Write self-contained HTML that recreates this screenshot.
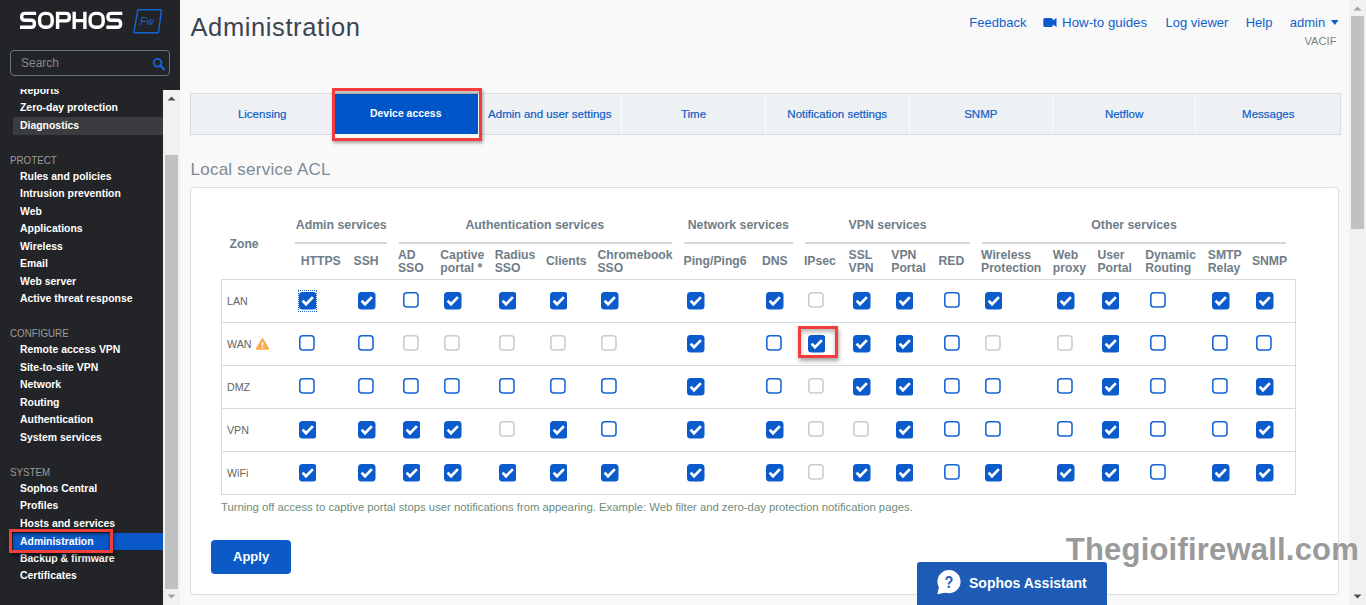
<!DOCTYPE html>
<html><head><meta charset="utf-8">
<style>
*{box-sizing:border-box}
html,body{margin:0;padding:0}
body{width:1366px;height:605px;overflow:hidden;position:relative;background:#f9f9fa;font-family:"Liberation Sans",sans-serif}
.a{position:absolute;white-space:nowrap;line-height:1}
#side{position:absolute;left:0;top:0;width:180px;height:605px;background:#232427}
#nav{position:absolute;left:0;top:89px;width:163px;height:516px;overflow:hidden}
.ni{position:absolute;left:20px;color:#fff;font-weight:bold;font-size:11.3px;line-height:1;white-space:nowrap}
.nh{position:absolute;left:10px;color:#9c9c9c;font-size:11px;line-height:1;white-space:nowrap}
.cb{position:absolute;display:block}
.cbu{position:absolute;width:16px;height:16px;border:1.4px solid #1764d4;border-radius:3px;background:#fff}
.hd{position:absolute;color:#6f7d87;font-weight:bold;font-size:12.2px;line-height:12.8px;white-space:nowrap}
.gl{position:absolute;height:2px;background:#d3d9dd;top:242px}
.tab{position:absolute;top:93px;height:41px;color:#1b5fc4;font-size:11.5px;text-align:center;line-height:41px}
.tsep{position:absolute;top:94px;width:1px;height:40px;background:#fbfcfd}
.zr{position:absolute;left:221px;width:1075px;height:1px;background:#d5dce0}
.zn{position:absolute;left:227px;color:#636363;font-size:11px;line-height:1}
.lk{position:absolute;color:#0f5fcc;font-size:13px;line-height:1;white-space:nowrap}
</style></head><body>

<div id="side">
  <svg class="a" style="left:0;top:0" width="180" height="45" viewBox="0 0 180 45">
    <g fill="none" stroke="#fff" stroke-width="3.4">
      <!-- S -->
      <path d="M36.1 13.4 H25 Q21.7 13.4 21.7 16.5 V17.3 Q21.7 20.3 25 20.3 H31 Q34.4 20.3 34.4 23.4 V24.2 Q34.4 27.3 31 27.3 H20"/>
      <!-- O -->
      <rect x="39.6" y="13.4" width="12.6" height="13.9" rx="5.5"/>
      <!-- P -->
      <path d="M57.6 29 V13.4 H66 Q69.3 13.4 69.3 16.5 V17.8 Q69.3 20.9 66 20.9 H57.6"/>
      <!-- H -->
      <path d="M74.2 11.7 V29 M84.9 11.7 V29 M74.2 20.6 H84.9"/>
      <!-- O -->
      <rect x="90.1" y="13.4" width="13.1" height="13.9" rx="5.5"/>
      <!-- S -->
      <path d="M122.3 13.4 H111.2 Q108 13.4 108 16.5 V17.3 Q108 20.3 111.2 20.3 H117.2 Q120.6 20.3 120.6 23.4 V24.2 Q120.6 27.3 117.2 27.3 H106.4"/>
    </g>
    <path d="M138.5 9.8 H160.8 Q161.6 9.8 161.4 10.6 L158.6 31.9 Q158.5 32.7 157.7 32.7 H134.8 Q134 32.7 134.1 31.9 L137.6 10.6 Q137.7 9.8 138.5 9.8 Z" fill="none" stroke="#1466d6" stroke-width="1.4"/>
    <text x="140.3" y="25.2" fill="#1466d6" font-family="Liberation Sans" font-style="italic" font-size="10" textLength="13.5">Fw</text>
  </svg>
  <div class="a" style="left:10px;top:50px;width:160px;height:26px;border:1px solid #6c747c;border-radius:4px"></div>
  <div class="a" style="left:21px;top:57px;color:#85898d;font-size:12px">Search</div>
  <svg class="a" style="left:152px;top:56.5px" width="14" height="14" viewBox="0 0 14 14"><circle cx="5.6" cy="5.8" r="3.9" fill="none" stroke="#1466e0" stroke-width="1.8"/><path d="M8.4 8.6 L12 12.2" stroke="#1466e0" stroke-width="2.2" stroke-linecap="round"/></svg>

  <div id="nav">
<div class="a" style="left:13px;top:27.7px;width:150px;height:18px;background:#3b3c3f"></div>
<div class="ni" style="left:20.0px;top:-5.32px;font-size:11.6px;transform:scaleX(0.9);transform-origin:0 0;">Reports</div>
<div class="ni" style="left:20.0px;top:12.08px;font-size:11.6px;transform:scaleX(0.9);transform-origin:0 0;">Zero-day protection</div>
<div class="ni" style="left:20.0px;top:29.98px;font-size:11.6px;transform:scaleX(0.9);transform-origin:0 0;">Diagnostics</div>
<div class="nh" style="left:10.3px;top:66.17px;font-size:11.5px;transform:scaleX(0.85);transform-origin:0 0;">PROTECT</div>
<div class="ni" style="left:20.0px;top:80.78px;font-size:11.6px;transform:scaleX(0.9);transform-origin:0 0;">Rules and policies</div>
<div class="ni" style="left:20.0px;top:98.28px;font-size:11.6px;transform:scaleX(0.9);transform-origin:0 0;">Intrusion prevention</div>
<div class="ni" style="left:20.0px;top:115.78px;font-size:11.6px;transform:scaleX(0.9);transform-origin:0 0;">Web</div>
<div class="ni" style="left:20.0px;top:133.28px;font-size:11.6px;transform:scaleX(0.9);transform-origin:0 0;">Applications</div>
<div class="ni" style="left:20.0px;top:150.78px;font-size:11.6px;transform:scaleX(0.9);transform-origin:0 0;">Wireless</div>
<div class="ni" style="left:20.0px;top:168.28px;font-size:11.6px;transform:scaleX(0.9);transform-origin:0 0;">Email</div>
<div class="ni" style="left:20.0px;top:185.78px;font-size:11.6px;transform:scaleX(0.9);transform-origin:0 0;">Web server</div>
<div class="ni" style="left:20.0px;top:203.28px;font-size:11.6px;transform:scaleX(0.9);transform-origin:0 0;">Active threat response</div>
<div class="nh" style="left:10.3px;top:239.27px;font-size:11.5px;transform:scaleX(0.85);transform-origin:0 0;">CONFIGURE</div>
<div class="ni" style="left:20.0px;top:254.38px;font-size:11.6px;transform:scaleX(0.9);transform-origin:0 0;">Remote access VPN</div>
<div class="ni" style="left:20.0px;top:271.88px;font-size:11.6px;transform:scaleX(0.9);transform-origin:0 0;">Site-to-site VPN</div>
<div class="ni" style="left:20.0px;top:289.38px;font-size:11.6px;transform:scaleX(0.9);transform-origin:0 0;">Network</div>
<div class="ni" style="left:20.0px;top:306.88px;font-size:11.6px;transform:scaleX(0.9);transform-origin:0 0;">Routing</div>
<div class="ni" style="left:20.0px;top:324.38px;font-size:11.6px;transform:scaleX(0.9);transform-origin:0 0;">Authentication</div>
<div class="ni" style="left:20.0px;top:341.88px;font-size:11.6px;transform:scaleX(0.9);transform-origin:0 0;">System services</div>
<div class="nh" style="left:10.3px;top:377.97px;font-size:11.5px;transform:scaleX(0.85);transform-origin:0 0;">SYSTEM</div>
<div class="a" style="left:13px;top:443.6px;width:150px;height:17.3px;background:#0b58c9"></div>
<div class="ni" style="left:20.0px;top:392.98px;font-size:11.6px;transform:scaleX(0.9);transform-origin:0 0;">Sophos Central</div>
<div class="ni" style="left:20.0px;top:410.43px;font-size:11.6px;transform:scaleX(0.9);transform-origin:0 0;">Profiles</div>
<div class="ni" style="left:20.0px;top:427.88px;font-size:11.6px;transform:scaleX(0.9);transform-origin:0 0;">Hosts and services</div>
<div class="ni" style="left:20.0px;top:446.13px;font-size:11.6px;transform:scaleX(0.9);transform-origin:0 0;">Administration</div>
<div class="ni" style="left:20.0px;top:462.78px;font-size:11.6px;transform:scaleX(0.9);transform-origin:0 0;">Backup &amp; firmware</div>
<div class="ni" style="left:20.0px;top:480.23px;font-size:11.6px;transform:scaleX(0.9);transform-origin:0 0;">Certificates</div>
<div class="a" style="left:9px;top:440px;width:104px;height:24px;border:3px solid #f03f3f;box-shadow:1px 3px 4px rgba(0,0,0,.5), inset 0 2px 4px rgba(0,0,0,.45)"></div>
  </div>
  <!-- sidebar scrollbar -->
  <div class="a" style="left:163px;top:90px;width:17px;height:515px;background:#f1f1f1"></div>
  <div class="a" style="left:165px;top:155px;width:13px;height:434px;background:#c1c1c1"></div>
  <svg class="a" style="left:163px;top:90px" width="17" height="17"><path d="M4.5 10.5 L8.5 6.5 L12.5 10.5Z" fill="#505050"/></svg>
  <svg class="a" style="left:163px;top:588px" width="17" height="17"><path d="M4.5 6.5 L8.5 10.5 L12.5 6.5Z" fill="#a3a3a3"/></svg>
</div>

<!-- header -->
<div class="a" style="left:190.5px;top:15.1px;color:#3a4550;font-size:25.5px;letter-spacing:0.6px">Administration</div>
<div class="lk" style="left:969.3px;top:16.00px;font-size:13px;">Feedback</div>
<svg class="a" style="left:1043px;top:17.9px" width="14" height="9.2" viewBox="0 0 14 9.2"><rect x="0.3" y="0" width="9.5" height="9" rx="1.6" fill="#0b5bcc"/><path d="M9 3 L13.5 0 V9 L9 6Z" fill="#0b5bcc"/></svg>
<div class="lk" style="left:1062.1px;top:15.74px;font-size:13.3px;">How-to guides</div>
<div class="lk" style="left:1165.5px;top:16.00px;font-size:13px;">Log viewer</div>
<div class="lk" style="left:1245.7px;top:16.00px;font-size:13px;">Help</div>
<div class="lk" style="left:1289.8px;top:16.00px;font-size:13px;">admin</div>
<svg class="a" style="left:1331.2px;top:19.8px" width="7.6" height="5" preserveAspectRatio="none" viewBox="0 0 8 5"><path d="M0 0 H8 L4 5Z" fill="#0b5bcc"/></svg>
<div class="a" style="left:1304.4px;top:35.99px;font-size:11px;color:#7a7f84;letter-spacing:0.1px;">VACIF</div>

<!-- tabs -->
<div class="a" style="left:190px;top:93px;width:1151px;height:42px;background:#eef1f4;border:1px solid #d8dcdf"></div>
<div class="tsep" style="left:621.0px"></div>
<div class="tsep" style="left:765.0px"></div>
<div class="tsep" style="left:908.5px"></div>
<div class="tsep" style="left:1052.1px"></div>
<div class="tsep" style="left:1195.1px"></div>
<div class="a" style="left:162.2px;width:200px;text-align:center;top:108.67px;font-size:11.5px;color:#0f5cc8;-webkit-text-stroke:0.2px #0f5cc8">Licensing</div>
<div class="a" style="left:449.8px;width:200px;text-align:center;top:108.67px;font-size:11.5px;color:#0f5cc8;-webkit-text-stroke:0.2px #0f5cc8">Admin and user settings</div>
<div class="a" style="left:593.5px;width:200px;text-align:center;top:108.67px;font-size:11.5px;color:#0f5cc8;-webkit-text-stroke:0.2px #0f5cc8">Time</div>
<div class="a" style="left:737.2px;width:200px;text-align:center;top:108.67px;font-size:11.5px;color:#0f5cc8;-webkit-text-stroke:0.2px #0f5cc8">Notification settings</div>
<div class="a" style="left:880.8px;width:200px;text-align:center;top:108.67px;font-size:11.5px;color:#0f5cc8;-webkit-text-stroke:0.2px #0f5cc8">SNMP</div>
<div class="a" style="left:1024.1px;width:200px;text-align:center;top:108.67px;font-size:11.5px;color:#0f5cc8;-webkit-text-stroke:0.2px #0f5cc8">Netflow</div>
<div class="a" style="left:1168.3px;width:200px;text-align:center;top:108.67px;font-size:11.5px;color:#0f5cc8;-webkit-text-stroke:0.2px #0f5cc8">Messages</div>
<div class="a" style="left:332px;top:88.2px;width:150px;height:52.8px;box-shadow:1px 2px 3px rgba(0,0,0,.35)"></div>
<div class="a" style="left:334.9px;top:91.2px;width:144.2px;height:46.6px;background:#f7f9f9"></div>
<div class="a" style="left:334.9px;top:91.2px;width:144.2px;height:2.8px;background:linear-gradient(#d0d0cc,#a9aaa6)"></div>
<div class="a" style="left:334.9px;top:94px;width:142.7px;height:39.6px;background:#0055c9;border-top:1px solid #0049ad"></div>
<div class="a" style="left:332px;top:88px;width:150px;height:53px;border:3px solid #f43b3e"></div>
<div class="a" style="left:370.2px;top:108.29px;font-size:11px;font-weight:bold;color:#fff;transform:scaleX(0.95);transform-origin:0 0">Device access</div>

<!-- content -->
<div class="a" style="left:190.5px;top:160.6px;color:#7d8a94;font-size:17px;letter-spacing:0.25px">Local service ACL</div>
<div class="a" style="left:190px;top:187px;width:1149px;height:408px;background:#fff;border:1px solid #dcdfe1;border-radius:4px"></div>

<div class="hd" style="left:295.8px;top:218.79px;font-size:12.3px;">Admin services</div>
<div class="gl" style="left:295.2px;width:91.7px"></div>
<div class="hd" style="left:465.4px;top:218.79px;font-size:12.3px;">Authentication services</div>
<div class="gl" style="left:398.9px;width:273.1px"></div>
<div class="hd" style="left:687.7px;top:218.79px;font-size:12.3px;">Network services</div>
<div class="gl" style="left:684.1px;width:108.5px"></div>
<div class="hd" style="left:848.6px;top:218.79px;font-size:12.3px;">VPN services</div>
<div class="gl" style="left:805px;width:164.6px"></div>
<div class="hd" style="left:1091.3px;top:218.79px;font-size:12.3px;">Other services</div>
<div class="gl" style="left:982.2px;width:303.5px"></div>
<div class="hd" style="left:229.5px;top:238.17px;font-size:12.2px;">Zone</div>
<div class="hd" style="left:300.8px;top:254.67px;font-size:12.2px;">HTTPS</div>
<div class="hd" style="left:353.5px;top:254.67px;font-size:12.2px;">SSH</div>
<div class="hd" style="left:546.0px;top:254.67px;font-size:12.2px;">Clients</div>
<div class="hd" style="left:683.6px;top:254.67px;font-size:12.2px;">Ping/Ping6</div>
<div class="hd" style="left:761.9px;top:254.67px;font-size:12.2px;">DNS</div>
<div class="hd" style="left:803.9px;top:254.67px;font-size:12.2px;">IPsec</div>
<div class="hd" style="left:938.5px;top:254.67px;font-size:12.2px;">RED</div>
<div class="hd" style="left:1251.9px;top:254.67px;font-size:12.2px;">SNMP</div>
<div class="hd" style="left:397.9px;top:248.77px;font-size:12.2px;">AD</div>
<div class="hd" style="left:397.9px;top:261.57px;font-size:12.2px;">SSO</div>
<div class="hd" style="left:440.3px;top:248.77px;font-size:12.2px;">Captive</div>
<div class="hd" style="left:440.3px;top:261.57px;font-size:12.2px;">portal *</div>
<div class="hd" style="left:494.7px;top:248.77px;font-size:12.2px;">Radius</div>
<div class="hd" style="left:494.7px;top:261.57px;font-size:12.2px;">SSO</div>
<div class="hd" style="left:597.4px;top:248.77px;font-size:12.2px;">Chromebook</div>
<div class="hd" style="left:597.4px;top:261.57px;font-size:12.2px;">SSO</div>
<div class="hd" style="left:848.6px;top:248.77px;font-size:12.2px;">SSL</div>
<div class="hd" style="left:848.6px;top:261.57px;font-size:12.2px;">VPN</div>
<div class="hd" style="left:891.3px;top:248.77px;font-size:12.2px;">VPN</div>
<div class="hd" style="left:891.3px;top:261.57px;font-size:12.2px;">Portal</div>
<div class="hd" style="left:981.0px;top:248.77px;font-size:12.2px;">Wireless</div>
<div class="hd" style="left:981.0px;top:261.57px;font-size:12.2px;">Protection</div>
<div class="hd" style="left:1052.8px;top:248.77px;font-size:12.2px;">Web</div>
<div class="hd" style="left:1052.8px;top:261.57px;font-size:12.2px;">proxy</div>
<div class="hd" style="left:1097.4px;top:248.77px;font-size:12.2px;">User</div>
<div class="hd" style="left:1097.4px;top:261.57px;font-size:12.2px;">Portal</div>
<div class="hd" style="left:1145.2px;top:248.77px;font-size:12.2px;">Dynamic</div>
<div class="hd" style="left:1145.2px;top:261.57px;font-size:12.2px;">Routing</div>
<div class="hd" style="left:1207.8px;top:248.77px;font-size:12.2px;">SMTP</div>
<div class="hd" style="left:1207.8px;top:261.57px;font-size:12.2px;">Relay</div>
<div class="a" style="left:221px;top:279px;width:1075px;height:216px;border:1px solid #d5dce0;background:#fff"></div>
<div class="zr" style="top:322px"></div>
<div class="zr" style="top:365px"></div>
<div class="zr" style="top:408px"></div>
<div class="zr" style="top:451px"></div>
<div class="zn" style="left:227.3px;top:295.59px;font-size:11px;transform:scaleX(0.97);transform-origin:0 0;">LAN</div>
<div class="zn" style="left:227.3px;top:338.59px;font-size:11px;transform:scaleX(0.97);transform-origin:0 0;">WAN</div>
<div class="zn" style="left:227.3px;top:381.59px;font-size:11px;transform:scaleX(0.97);transform-origin:0 0;">DMZ</div>
<div class="zn" style="left:227.3px;top:424.59px;font-size:11px;transform:scaleX(0.97);transform-origin:0 0;">VPN</div>
<div class="zn" style="left:227.3px;top:467.59px;font-size:11px;transform:scaleX(0.97);transform-origin:0 0;">WiFi</div>
<svg class="a" style="left:255px;top:337px" width="15" height="14" viewBox="0 0 15 14"><path d="M7.5 1.9 L13.4 12 H1.6Z" fill="#fcab4c" stroke="#fcab4c" stroke-width="1.6" stroke-linejoin="round"/><rect x="6.75" y="5.2" width="1.5" height="3.6" fill="#fff"/><rect x="6.75" y="9.8" width="1.5" height="1.5" fill="#fff"/></svg>
<svg class="cb" style="left:298.7px;top:292px" width="17.5" height="17.5" viewBox="0 0 17.5 17.5"><rect x="0" y="0" width="17.5" height="17.5" rx="3.5" fill="#0b5bcc"/><path d="M3.6 8.6 L7 12.2 L13.9 5.1" fill="none" stroke="#fff" stroke-width="2.7"/></svg>
<svg class="cb" style="left:358.1px;top:292px" width="17.5" height="17.5" viewBox="0 0 17.5 17.5"><rect x="0" y="0" width="17.5" height="17.5" rx="3.5" fill="#0b5bcc"/><path d="M3.6 8.6 L7 12.2 L13.9 5.1" fill="none" stroke="#fff" stroke-width="2.7"/></svg>
<svg class="cb" style="left:402.8px;top:292px" width="16" height="16" viewBox="0 0 16 16"><rect x="0.8" y="0.8" width="14.2" height="14.2" rx="3" fill="#fff" stroke="#1764d4" stroke-width="1.55"/></svg>
<svg class="cb" style="left:444.1px;top:292px" width="17.5" height="17.5" viewBox="0 0 17.5 17.5"><rect x="0" y="0" width="17.5" height="17.5" rx="3.5" fill="#0b5bcc"/><path d="M3.6 8.6 L7 12.2 L13.9 5.1" fill="none" stroke="#fff" stroke-width="2.7"/></svg>
<svg class="cb" style="left:498.6px;top:292px" width="17.5" height="17.5" viewBox="0 0 17.5 17.5"><rect x="0" y="0" width="17.5" height="17.5" rx="3.5" fill="#0b5bcc"/><path d="M3.6 8.6 L7 12.2 L13.9 5.1" fill="none" stroke="#fff" stroke-width="2.7"/></svg>
<svg class="cb" style="left:549.9px;top:292px" width="17.5" height="17.5" viewBox="0 0 17.5 17.5"><rect x="0" y="0" width="17.5" height="17.5" rx="3.5" fill="#0b5bcc"/><path d="M3.6 8.6 L7 12.2 L13.9 5.1" fill="none" stroke="#fff" stroke-width="2.7"/></svg>
<svg class="cb" style="left:601.2px;top:292px" width="17.5" height="17.5" viewBox="0 0 17.5 17.5"><rect x="0" y="0" width="17.5" height="17.5" rx="3.5" fill="#0b5bcc"/><path d="M3.6 8.6 L7 12.2 L13.9 5.1" fill="none" stroke="#fff" stroke-width="2.7"/></svg>
<svg class="cb" style="left:687.4px;top:292px" width="17.5" height="17.5" viewBox="0 0 17.5 17.5"><rect x="0" y="0" width="17.5" height="17.5" rx="3.5" fill="#0b5bcc"/><path d="M3.6 8.6 L7 12.2 L13.9 5.1" fill="none" stroke="#fff" stroke-width="2.7"/></svg>
<svg class="cb" style="left:766.0px;top:292px" width="17.5" height="17.5" viewBox="0 0 17.5 17.5"><rect x="0" y="0" width="17.5" height="17.5" rx="3.5" fill="#0b5bcc"/><path d="M3.6 8.6 L7 12.2 L13.9 5.1" fill="none" stroke="#fff" stroke-width="2.7"/></svg>
<svg class="cb" style="left:807.9px;top:292px" width="16" height="16" viewBox="0 0 16 16"><rect x="0.8" y="0.8" width="14.2" height="14.2" rx="3" fill="#fff" stroke="#cccccc" stroke-width="1.55"/></svg>
<svg class="cb" style="left:853.0px;top:292px" width="17.5" height="17.5" viewBox="0 0 17.5 17.5"><rect x="0" y="0" width="17.5" height="17.5" rx="3.5" fill="#0b5bcc"/><path d="M3.6 8.6 L7 12.2 L13.9 5.1" fill="none" stroke="#fff" stroke-width="2.7"/></svg>
<svg class="cb" style="left:895.5px;top:292px" width="17.5" height="17.5" viewBox="0 0 17.5 17.5"><rect x="0" y="0" width="17.5" height="17.5" rx="3.5" fill="#0b5bcc"/><path d="M3.6 8.6 L7 12.2 L13.9 5.1" fill="none" stroke="#fff" stroke-width="2.7"/></svg>
<svg class="cb" style="left:943.7px;top:292px" width="16" height="16" viewBox="0 0 16 16"><rect x="0.8" y="0.8" width="14.2" height="14.2" rx="3" fill="#fff" stroke="#1764d4" stroke-width="1.55"/></svg>
<svg class="cb" style="left:984.8px;top:292px" width="17.5" height="17.5" viewBox="0 0 17.5 17.5"><rect x="0" y="0" width="17.5" height="17.5" rx="3.5" fill="#0b5bcc"/><path d="M3.6 8.6 L7 12.2 L13.9 5.1" fill="none" stroke="#fff" stroke-width="2.7"/></svg>
<svg class="cb" style="left:1057.2px;top:292px" width="17.5" height="17.5" viewBox="0 0 17.5 17.5"><rect x="0" y="0" width="17.5" height="17.5" rx="3.5" fill="#0b5bcc"/><path d="M3.6 8.6 L7 12.2 L13.9 5.1" fill="none" stroke="#fff" stroke-width="2.7"/></svg>
<svg class="cb" style="left:1101.6px;top:292px" width="17.5" height="17.5" viewBox="0 0 17.5 17.5"><rect x="0" y="0" width="17.5" height="17.5" rx="3.5" fill="#0b5bcc"/><path d="M3.6 8.6 L7 12.2 L13.9 5.1" fill="none" stroke="#fff" stroke-width="2.7"/></svg>
<svg class="cb" style="left:1150.2px;top:292px" width="16" height="16" viewBox="0 0 16 16"><rect x="0.8" y="0.8" width="14.2" height="14.2" rx="3" fill="#fff" stroke="#1764d4" stroke-width="1.55"/></svg>
<svg class="cb" style="left:1212.2px;top:292px" width="17.5" height="17.5" viewBox="0 0 17.5 17.5"><rect x="0" y="0" width="17.5" height="17.5" rx="3.5" fill="#0b5bcc"/><path d="M3.6 8.6 L7 12.2 L13.9 5.1" fill="none" stroke="#fff" stroke-width="2.7"/></svg>
<svg class="cb" style="left:1256.0px;top:292px" width="17.5" height="17.5" viewBox="0 0 17.5 17.5"><rect x="0" y="0" width="17.5" height="17.5" rx="3.5" fill="#0b5bcc"/><path d="M3.6 8.6 L7 12.2 L13.9 5.1" fill="none" stroke="#fff" stroke-width="2.7"/></svg>
<svg class="cb" style="left:298.7px;top:335px" width="16" height="16" viewBox="0 0 16 16"><rect x="0.8" y="0.8" width="14.2" height="14.2" rx="3" fill="#fff" stroke="#1764d4" stroke-width="1.55"/></svg>
<svg class="cb" style="left:358.1px;top:335px" width="16" height="16" viewBox="0 0 16 16"><rect x="0.8" y="0.8" width="14.2" height="14.2" rx="3" fill="#fff" stroke="#1764d4" stroke-width="1.55"/></svg>
<svg class="cb" style="left:402.8px;top:335px" width="16" height="16" viewBox="0 0 16 16"><rect x="0.8" y="0.8" width="14.2" height="14.2" rx="3" fill="#fff" stroke="#cccccc" stroke-width="1.55"/></svg>
<svg class="cb" style="left:444.1px;top:335px" width="16" height="16" viewBox="0 0 16 16"><rect x="0.8" y="0.8" width="14.2" height="14.2" rx="3" fill="#fff" stroke="#cccccc" stroke-width="1.55"/></svg>
<svg class="cb" style="left:498.6px;top:335px" width="16" height="16" viewBox="0 0 16 16"><rect x="0.8" y="0.8" width="14.2" height="14.2" rx="3" fill="#fff" stroke="#cccccc" stroke-width="1.55"/></svg>
<svg class="cb" style="left:549.9px;top:335px" width="16" height="16" viewBox="0 0 16 16"><rect x="0.8" y="0.8" width="14.2" height="14.2" rx="3" fill="#fff" stroke="#cccccc" stroke-width="1.55"/></svg>
<svg class="cb" style="left:601.2px;top:335px" width="16" height="16" viewBox="0 0 16 16"><rect x="0.8" y="0.8" width="14.2" height="14.2" rx="3" fill="#fff" stroke="#cccccc" stroke-width="1.55"/></svg>
<svg class="cb" style="left:687.4px;top:335px" width="17.5" height="17.5" viewBox="0 0 17.5 17.5"><rect x="0" y="0" width="17.5" height="17.5" rx="3.5" fill="#0b5bcc"/><path d="M3.6 8.6 L7 12.2 L13.9 5.1" fill="none" stroke="#fff" stroke-width="2.7"/></svg>
<svg class="cb" style="left:766.0px;top:335px" width="16" height="16" viewBox="0 0 16 16"><rect x="0.8" y="0.8" width="14.2" height="14.2" rx="3" fill="#fff" stroke="#1764d4" stroke-width="1.55"/></svg>
<svg class="cb" style="left:807.9px;top:335px" width="17.5" height="17.5" viewBox="0 0 17.5 17.5"><rect x="0" y="0" width="17.5" height="17.5" rx="3.5" fill="#0b5bcc"/><path d="M3.6 8.6 L7 12.2 L13.9 5.1" fill="none" stroke="#fff" stroke-width="2.7"/></svg>
<svg class="cb" style="left:853.0px;top:335px" width="17.5" height="17.5" viewBox="0 0 17.5 17.5"><rect x="0" y="0" width="17.5" height="17.5" rx="3.5" fill="#0b5bcc"/><path d="M3.6 8.6 L7 12.2 L13.9 5.1" fill="none" stroke="#fff" stroke-width="2.7"/></svg>
<svg class="cb" style="left:895.5px;top:335px" width="17.5" height="17.5" viewBox="0 0 17.5 17.5"><rect x="0" y="0" width="17.5" height="17.5" rx="3.5" fill="#0b5bcc"/><path d="M3.6 8.6 L7 12.2 L13.9 5.1" fill="none" stroke="#fff" stroke-width="2.7"/></svg>
<svg class="cb" style="left:943.7px;top:335px" width="16" height="16" viewBox="0 0 16 16"><rect x="0.8" y="0.8" width="14.2" height="14.2" rx="3" fill="#fff" stroke="#1764d4" stroke-width="1.55"/></svg>
<svg class="cb" style="left:984.8px;top:335px" width="16" height="16" viewBox="0 0 16 16"><rect x="0.8" y="0.8" width="14.2" height="14.2" rx="3" fill="#fff" stroke="#cccccc" stroke-width="1.55"/></svg>
<svg class="cb" style="left:1057.2px;top:335px" width="16" height="16" viewBox="0 0 16 16"><rect x="0.8" y="0.8" width="14.2" height="14.2" rx="3" fill="#fff" stroke="#cccccc" stroke-width="1.55"/></svg>
<svg class="cb" style="left:1101.6px;top:335px" width="17.5" height="17.5" viewBox="0 0 17.5 17.5"><rect x="0" y="0" width="17.5" height="17.5" rx="3.5" fill="#0b5bcc"/><path d="M3.6 8.6 L7 12.2 L13.9 5.1" fill="none" stroke="#fff" stroke-width="2.7"/></svg>
<svg class="cb" style="left:1150.2px;top:335px" width="16" height="16" viewBox="0 0 16 16"><rect x="0.8" y="0.8" width="14.2" height="14.2" rx="3" fill="#fff" stroke="#1764d4" stroke-width="1.55"/></svg>
<svg class="cb" style="left:1212.2px;top:335px" width="16" height="16" viewBox="0 0 16 16"><rect x="0.8" y="0.8" width="14.2" height="14.2" rx="3" fill="#fff" stroke="#1764d4" stroke-width="1.55"/></svg>
<svg class="cb" style="left:1256.0px;top:335px" width="16" height="16" viewBox="0 0 16 16"><rect x="0.8" y="0.8" width="14.2" height="14.2" rx="3" fill="#fff" stroke="#1764d4" stroke-width="1.55"/></svg>
<svg class="cb" style="left:298.7px;top:378px" width="16" height="16" viewBox="0 0 16 16"><rect x="0.8" y="0.8" width="14.2" height="14.2" rx="3" fill="#fff" stroke="#1764d4" stroke-width="1.55"/></svg>
<svg class="cb" style="left:358.1px;top:378px" width="16" height="16" viewBox="0 0 16 16"><rect x="0.8" y="0.8" width="14.2" height="14.2" rx="3" fill="#fff" stroke="#1764d4" stroke-width="1.55"/></svg>
<svg class="cb" style="left:402.8px;top:378px" width="16" height="16" viewBox="0 0 16 16"><rect x="0.8" y="0.8" width="14.2" height="14.2" rx="3" fill="#fff" stroke="#1764d4" stroke-width="1.55"/></svg>
<svg class="cb" style="left:444.1px;top:378px" width="16" height="16" viewBox="0 0 16 16"><rect x="0.8" y="0.8" width="14.2" height="14.2" rx="3" fill="#fff" stroke="#1764d4" stroke-width="1.55"/></svg>
<svg class="cb" style="left:498.6px;top:378px" width="16" height="16" viewBox="0 0 16 16"><rect x="0.8" y="0.8" width="14.2" height="14.2" rx="3" fill="#fff" stroke="#1764d4" stroke-width="1.55"/></svg>
<svg class="cb" style="left:549.9px;top:378px" width="16" height="16" viewBox="0 0 16 16"><rect x="0.8" y="0.8" width="14.2" height="14.2" rx="3" fill="#fff" stroke="#1764d4" stroke-width="1.55"/></svg>
<svg class="cb" style="left:601.2px;top:378px" width="16" height="16" viewBox="0 0 16 16"><rect x="0.8" y="0.8" width="14.2" height="14.2" rx="3" fill="#fff" stroke="#1764d4" stroke-width="1.55"/></svg>
<svg class="cb" style="left:687.4px;top:378px" width="17.5" height="17.5" viewBox="0 0 17.5 17.5"><rect x="0" y="0" width="17.5" height="17.5" rx="3.5" fill="#0b5bcc"/><path d="M3.6 8.6 L7 12.2 L13.9 5.1" fill="none" stroke="#fff" stroke-width="2.7"/></svg>
<svg class="cb" style="left:766.0px;top:378px" width="16" height="16" viewBox="0 0 16 16"><rect x="0.8" y="0.8" width="14.2" height="14.2" rx="3" fill="#fff" stroke="#1764d4" stroke-width="1.55"/></svg>
<svg class="cb" style="left:807.9px;top:378px" width="16" height="16" viewBox="0 0 16 16"><rect x="0.8" y="0.8" width="14.2" height="14.2" rx="3" fill="#fff" stroke="#cccccc" stroke-width="1.55"/></svg>
<svg class="cb" style="left:853.0px;top:378px" width="17.5" height="17.5" viewBox="0 0 17.5 17.5"><rect x="0" y="0" width="17.5" height="17.5" rx="3.5" fill="#0b5bcc"/><path d="M3.6 8.6 L7 12.2 L13.9 5.1" fill="none" stroke="#fff" stroke-width="2.7"/></svg>
<svg class="cb" style="left:895.5px;top:378px" width="17.5" height="17.5" viewBox="0 0 17.5 17.5"><rect x="0" y="0" width="17.5" height="17.5" rx="3.5" fill="#0b5bcc"/><path d="M3.6 8.6 L7 12.2 L13.9 5.1" fill="none" stroke="#fff" stroke-width="2.7"/></svg>
<svg class="cb" style="left:943.7px;top:378px" width="16" height="16" viewBox="0 0 16 16"><rect x="0.8" y="0.8" width="14.2" height="14.2" rx="3" fill="#fff" stroke="#1764d4" stroke-width="1.55"/></svg>
<svg class="cb" style="left:984.8px;top:378px" width="16" height="16" viewBox="0 0 16 16"><rect x="0.8" y="0.8" width="14.2" height="14.2" rx="3" fill="#fff" stroke="#1764d4" stroke-width="1.55"/></svg>
<svg class="cb" style="left:1057.2px;top:378px" width="16" height="16" viewBox="0 0 16 16"><rect x="0.8" y="0.8" width="14.2" height="14.2" rx="3" fill="#fff" stroke="#1764d4" stroke-width="1.55"/></svg>
<svg class="cb" style="left:1101.6px;top:378px" width="17.5" height="17.5" viewBox="0 0 17.5 17.5"><rect x="0" y="0" width="17.5" height="17.5" rx="3.5" fill="#0b5bcc"/><path d="M3.6 8.6 L7 12.2 L13.9 5.1" fill="none" stroke="#fff" stroke-width="2.7"/></svg>
<svg class="cb" style="left:1150.2px;top:378px" width="16" height="16" viewBox="0 0 16 16"><rect x="0.8" y="0.8" width="14.2" height="14.2" rx="3" fill="#fff" stroke="#1764d4" stroke-width="1.55"/></svg>
<svg class="cb" style="left:1212.2px;top:378px" width="16" height="16" viewBox="0 0 16 16"><rect x="0.8" y="0.8" width="14.2" height="14.2" rx="3" fill="#fff" stroke="#1764d4" stroke-width="1.55"/></svg>
<svg class="cb" style="left:1256.0px;top:378px" width="17.5" height="17.5" viewBox="0 0 17.5 17.5"><rect x="0" y="0" width="17.5" height="17.5" rx="3.5" fill="#0b5bcc"/><path d="M3.6 8.6 L7 12.2 L13.9 5.1" fill="none" stroke="#fff" stroke-width="2.7"/></svg>
<svg class="cb" style="left:298.7px;top:421px" width="17.5" height="17.5" viewBox="0 0 17.5 17.5"><rect x="0" y="0" width="17.5" height="17.5" rx="3.5" fill="#0b5bcc"/><path d="M3.6 8.6 L7 12.2 L13.9 5.1" fill="none" stroke="#fff" stroke-width="2.7"/></svg>
<svg class="cb" style="left:358.1px;top:421px" width="17.5" height="17.5" viewBox="0 0 17.5 17.5"><rect x="0" y="0" width="17.5" height="17.5" rx="3.5" fill="#0b5bcc"/><path d="M3.6 8.6 L7 12.2 L13.9 5.1" fill="none" stroke="#fff" stroke-width="2.7"/></svg>
<svg class="cb" style="left:402.8px;top:421px" width="17.5" height="17.5" viewBox="0 0 17.5 17.5"><rect x="0" y="0" width="17.5" height="17.5" rx="3.5" fill="#0b5bcc"/><path d="M3.6 8.6 L7 12.2 L13.9 5.1" fill="none" stroke="#fff" stroke-width="2.7"/></svg>
<svg class="cb" style="left:444.1px;top:421px" width="17.5" height="17.5" viewBox="0 0 17.5 17.5"><rect x="0" y="0" width="17.5" height="17.5" rx="3.5" fill="#0b5bcc"/><path d="M3.6 8.6 L7 12.2 L13.9 5.1" fill="none" stroke="#fff" stroke-width="2.7"/></svg>
<svg class="cb" style="left:498.6px;top:421px" width="16" height="16" viewBox="0 0 16 16"><rect x="0.8" y="0.8" width="14.2" height="14.2" rx="3" fill="#fff" stroke="#cccccc" stroke-width="1.55"/></svg>
<svg class="cb" style="left:549.9px;top:421px" width="17.5" height="17.5" viewBox="0 0 17.5 17.5"><rect x="0" y="0" width="17.5" height="17.5" rx="3.5" fill="#0b5bcc"/><path d="M3.6 8.6 L7 12.2 L13.9 5.1" fill="none" stroke="#fff" stroke-width="2.7"/></svg>
<svg class="cb" style="left:601.2px;top:421px" width="16" height="16" viewBox="0 0 16 16"><rect x="0.8" y="0.8" width="14.2" height="14.2" rx="3" fill="#fff" stroke="#1764d4" stroke-width="1.55"/></svg>
<svg class="cb" style="left:687.4px;top:421px" width="17.5" height="17.5" viewBox="0 0 17.5 17.5"><rect x="0" y="0" width="17.5" height="17.5" rx="3.5" fill="#0b5bcc"/><path d="M3.6 8.6 L7 12.2 L13.9 5.1" fill="none" stroke="#fff" stroke-width="2.7"/></svg>
<svg class="cb" style="left:766.0px;top:421px" width="17.5" height="17.5" viewBox="0 0 17.5 17.5"><rect x="0" y="0" width="17.5" height="17.5" rx="3.5" fill="#0b5bcc"/><path d="M3.6 8.6 L7 12.2 L13.9 5.1" fill="none" stroke="#fff" stroke-width="2.7"/></svg>
<svg class="cb" style="left:807.9px;top:421px" width="16" height="16" viewBox="0 0 16 16"><rect x="0.8" y="0.8" width="14.2" height="14.2" rx="3" fill="#fff" stroke="#cccccc" stroke-width="1.55"/></svg>
<svg class="cb" style="left:853.0px;top:421px" width="16" height="16" viewBox="0 0 16 16"><rect x="0.8" y="0.8" width="14.2" height="14.2" rx="3" fill="#fff" stroke="#cccccc" stroke-width="1.55"/></svg>
<svg class="cb" style="left:895.5px;top:421px" width="17.5" height="17.5" viewBox="0 0 17.5 17.5"><rect x="0" y="0" width="17.5" height="17.5" rx="3.5" fill="#0b5bcc"/><path d="M3.6 8.6 L7 12.2 L13.9 5.1" fill="none" stroke="#fff" stroke-width="2.7"/></svg>
<svg class="cb" style="left:943.7px;top:421px" width="16" height="16" viewBox="0 0 16 16"><rect x="0.8" y="0.8" width="14.2" height="14.2" rx="3" fill="#fff" stroke="#1764d4" stroke-width="1.55"/></svg>
<svg class="cb" style="left:984.8px;top:421px" width="16" height="16" viewBox="0 0 16 16"><rect x="0.8" y="0.8" width="14.2" height="14.2" rx="3" fill="#fff" stroke="#1764d4" stroke-width="1.55"/></svg>
<svg class="cb" style="left:1057.2px;top:421px" width="16" height="16" viewBox="0 0 16 16"><rect x="0.8" y="0.8" width="14.2" height="14.2" rx="3" fill="#fff" stroke="#1764d4" stroke-width="1.55"/></svg>
<svg class="cb" style="left:1101.6px;top:421px" width="17.5" height="17.5" viewBox="0 0 17.5 17.5"><rect x="0" y="0" width="17.5" height="17.5" rx="3.5" fill="#0b5bcc"/><path d="M3.6 8.6 L7 12.2 L13.9 5.1" fill="none" stroke="#fff" stroke-width="2.7"/></svg>
<svg class="cb" style="left:1150.2px;top:421px" width="16" height="16" viewBox="0 0 16 16"><rect x="0.8" y="0.8" width="14.2" height="14.2" rx="3" fill="#fff" stroke="#1764d4" stroke-width="1.55"/></svg>
<svg class="cb" style="left:1212.2px;top:421px" width="16" height="16" viewBox="0 0 16 16"><rect x="0.8" y="0.8" width="14.2" height="14.2" rx="3" fill="#fff" stroke="#1764d4" stroke-width="1.55"/></svg>
<svg class="cb" style="left:1256.0px;top:421px" width="17.5" height="17.5" viewBox="0 0 17.5 17.5"><rect x="0" y="0" width="17.5" height="17.5" rx="3.5" fill="#0b5bcc"/><path d="M3.6 8.6 L7 12.2 L13.9 5.1" fill="none" stroke="#fff" stroke-width="2.7"/></svg>
<svg class="cb" style="left:298.7px;top:464px" width="17.5" height="17.5" viewBox="0 0 17.5 17.5"><rect x="0" y="0" width="17.5" height="17.5" rx="3.5" fill="#0b5bcc"/><path d="M3.6 8.6 L7 12.2 L13.9 5.1" fill="none" stroke="#fff" stroke-width="2.7"/></svg>
<svg class="cb" style="left:358.1px;top:464px" width="17.5" height="17.5" viewBox="0 0 17.5 17.5"><rect x="0" y="0" width="17.5" height="17.5" rx="3.5" fill="#0b5bcc"/><path d="M3.6 8.6 L7 12.2 L13.9 5.1" fill="none" stroke="#fff" stroke-width="2.7"/></svg>
<svg class="cb" style="left:402.8px;top:464px" width="17.5" height="17.5" viewBox="0 0 17.5 17.5"><rect x="0" y="0" width="17.5" height="17.5" rx="3.5" fill="#0b5bcc"/><path d="M3.6 8.6 L7 12.2 L13.9 5.1" fill="none" stroke="#fff" stroke-width="2.7"/></svg>
<svg class="cb" style="left:444.1px;top:464px" width="17.5" height="17.5" viewBox="0 0 17.5 17.5"><rect x="0" y="0" width="17.5" height="17.5" rx="3.5" fill="#0b5bcc"/><path d="M3.6 8.6 L7 12.2 L13.9 5.1" fill="none" stroke="#fff" stroke-width="2.7"/></svg>
<svg class="cb" style="left:498.6px;top:464px" width="17.5" height="17.5" viewBox="0 0 17.5 17.5"><rect x="0" y="0" width="17.5" height="17.5" rx="3.5" fill="#0b5bcc"/><path d="M3.6 8.6 L7 12.2 L13.9 5.1" fill="none" stroke="#fff" stroke-width="2.7"/></svg>
<svg class="cb" style="left:549.9px;top:464px" width="17.5" height="17.5" viewBox="0 0 17.5 17.5"><rect x="0" y="0" width="17.5" height="17.5" rx="3.5" fill="#0b5bcc"/><path d="M3.6 8.6 L7 12.2 L13.9 5.1" fill="none" stroke="#fff" stroke-width="2.7"/></svg>
<svg class="cb" style="left:601.2px;top:464px" width="17.5" height="17.5" viewBox="0 0 17.5 17.5"><rect x="0" y="0" width="17.5" height="17.5" rx="3.5" fill="#0b5bcc"/><path d="M3.6 8.6 L7 12.2 L13.9 5.1" fill="none" stroke="#fff" stroke-width="2.7"/></svg>
<svg class="cb" style="left:687.4px;top:464px" width="17.5" height="17.5" viewBox="0 0 17.5 17.5"><rect x="0" y="0" width="17.5" height="17.5" rx="3.5" fill="#0b5bcc"/><path d="M3.6 8.6 L7 12.2 L13.9 5.1" fill="none" stroke="#fff" stroke-width="2.7"/></svg>
<svg class="cb" style="left:766.0px;top:464px" width="17.5" height="17.5" viewBox="0 0 17.5 17.5"><rect x="0" y="0" width="17.5" height="17.5" rx="3.5" fill="#0b5bcc"/><path d="M3.6 8.6 L7 12.2 L13.9 5.1" fill="none" stroke="#fff" stroke-width="2.7"/></svg>
<svg class="cb" style="left:807.9px;top:464px" width="16" height="16" viewBox="0 0 16 16"><rect x="0.8" y="0.8" width="14.2" height="14.2" rx="3" fill="#fff" stroke="#cccccc" stroke-width="1.55"/></svg>
<svg class="cb" style="left:853.0px;top:464px" width="17.5" height="17.5" viewBox="0 0 17.5 17.5"><rect x="0" y="0" width="17.5" height="17.5" rx="3.5" fill="#0b5bcc"/><path d="M3.6 8.6 L7 12.2 L13.9 5.1" fill="none" stroke="#fff" stroke-width="2.7"/></svg>
<svg class="cb" style="left:895.5px;top:464px" width="17.5" height="17.5" viewBox="0 0 17.5 17.5"><rect x="0" y="0" width="17.5" height="17.5" rx="3.5" fill="#0b5bcc"/><path d="M3.6 8.6 L7 12.2 L13.9 5.1" fill="none" stroke="#fff" stroke-width="2.7"/></svg>
<svg class="cb" style="left:943.7px;top:464px" width="16" height="16" viewBox="0 0 16 16"><rect x="0.8" y="0.8" width="14.2" height="14.2" rx="3" fill="#fff" stroke="#1764d4" stroke-width="1.55"/></svg>
<svg class="cb" style="left:984.8px;top:464px" width="17.5" height="17.5" viewBox="0 0 17.5 17.5"><rect x="0" y="0" width="17.5" height="17.5" rx="3.5" fill="#0b5bcc"/><path d="M3.6 8.6 L7 12.2 L13.9 5.1" fill="none" stroke="#fff" stroke-width="2.7"/></svg>
<svg class="cb" style="left:1057.2px;top:464px" width="17.5" height="17.5" viewBox="0 0 17.5 17.5"><rect x="0" y="0" width="17.5" height="17.5" rx="3.5" fill="#0b5bcc"/><path d="M3.6 8.6 L7 12.2 L13.9 5.1" fill="none" stroke="#fff" stroke-width="2.7"/></svg>
<svg class="cb" style="left:1101.6px;top:464px" width="17.5" height="17.5" viewBox="0 0 17.5 17.5"><rect x="0" y="0" width="17.5" height="17.5" rx="3.5" fill="#0b5bcc"/><path d="M3.6 8.6 L7 12.2 L13.9 5.1" fill="none" stroke="#fff" stroke-width="2.7"/></svg>
<svg class="cb" style="left:1150.2px;top:464px" width="16" height="16" viewBox="0 0 16 16"><rect x="0.8" y="0.8" width="14.2" height="14.2" rx="3" fill="#fff" stroke="#1764d4" stroke-width="1.55"/></svg>
<svg class="cb" style="left:1212.2px;top:464px" width="17.5" height="17.5" viewBox="0 0 17.5 17.5"><rect x="0" y="0" width="17.5" height="17.5" rx="3.5" fill="#0b5bcc"/><path d="M3.6 8.6 L7 12.2 L13.9 5.1" fill="none" stroke="#fff" stroke-width="2.7"/></svg>
<svg class="cb" style="left:1256.0px;top:464px" width="17.5" height="17.5" viewBox="0 0 17.5 17.5"><rect x="0" y="0" width="17.5" height="17.5" rx="3.5" fill="#0b5bcc"/><path d="M3.6 8.6 L7 12.2 L13.9 5.1" fill="none" stroke="#fff" stroke-width="2.7"/></svg>
<div class="a" style="left:298px;top:290px;width:19px;height:22px;border:1px dotted #2f6fc0"></div>
<div class="a" style="left:798px;top:326px;width:40px;height:32px;border:3px solid #f63d3d;box-shadow:1px 3px 4px rgba(0,0,0,.35), inset 0 3px 4px rgba(0,0,0,.28)"></div>

<div class="a" style="left:221px;top:502px;color:#6c8d7c;font-size:11.3px">Turning off access to captive portal stops user notifications from appearing. Example: Web filter and zero-day protection notification pages.</div>
<div class="a" style="left:211px;top:540px;width:80px;height:34px;background:#0c5ac8;border-radius:4px"></div>
<div class="a" style="left:233px;top:550px;color:#fff;font-size:13px;font-weight:bold">Apply</div>


<div class="a" style="left:917px;top:562px;width:190px;height:50px;background:#1d5bb6;border-radius:3px 3px 0 0"></div>
<svg class="a" style="left:935px;top:569px" width="28" height="28" viewBox="0 0 28 28"><circle cx="14" cy="12.6" r="11.6" fill="#fff"/><path d="M4.2 17 L2.3 25.3 L11 23.5Z" fill="#fff"/><text x="14" y="19" text-anchor="middle" fill="#1d5bb6" font-family="Liberation Sans" font-weight="bold" font-size="17" transform="translate(14 0) scale(0.85 1) translate(-14 0)">?</text></svg>
<div class="a" style="left:969px;top:575.5px;color:#fff;font-size:14px;font-weight:bold">Sophos Assistant</div>

<!-- main scrollbar -->
<div class="a" style="left:1349px;top:0;width:17px;height:605px;background:#f1f1f1"></div>
<div class="a" style="left:1351px;top:16px;width:13px;height:213px;background:#c1c1c1"></div>
<svg class="a" style="left:1349px;top:0" width="17" height="17"><path d="M4.5 10.5 L8.5 6.5 L12.5 10.5Z" fill="#a3a3a3"/></svg>
<svg class="a" style="left:1349px;top:588px" width="17" height="17"><path d="M4.5 6.5 L8.5 10.5 L12.5 6.5Z" fill="#505050"/></svg>

<div class="a" style="left:1065.8px;top:533.8px;color:#9a9a9a;font-size:31px;font-weight:bold;letter-spacing:0.2px">Thegioifirewall.com</div>
</body></html>
